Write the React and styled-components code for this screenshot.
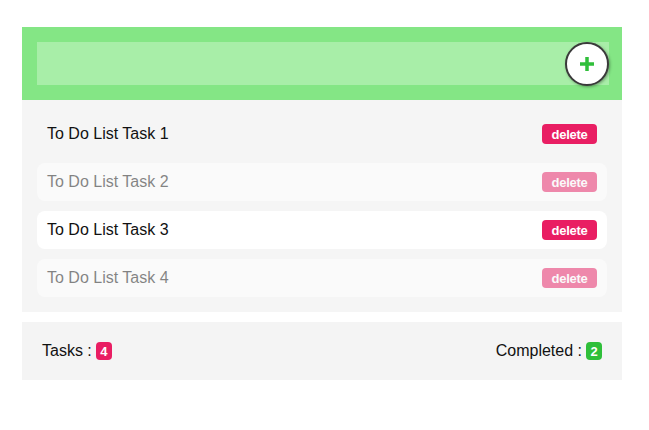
import React from "react";
import styled, { createGlobalStyle } from "styled-components";

const Global = createGlobalStyle`
  body { margin: 0; background: #fff; font-family: "Liberation Sans", Arial, sans-serif; }
`;

const Wrap = styled.div`
  width: 600px;
  padding: 27px 0 0 22px;
  display: flex;
  flex-direction: column;
`;

const Header = styled.div`
  background: #84e685;
  padding: 15px 13px 15px 15px;
  display: flex;
  align-items: center;
  position: relative;
`;

const Input = styled.input`
  flex: 1;
  height: 43px;
  border: none;
  outline: none;
  background: #a8eea8;
  box-sizing: border-box;
  padding: 0 50px 0 10px;
  font-size: 16px;
  font-family: inherit;
`;

const AddButton = styled.button`
  position: absolute;
  right: 13px;
  top: 50%;
  transform: translateY(-50%);
  width: 44px;
  height: 44px;
  border-radius: 50%;
  background: #fff;
  border: 2px solid #3a3a3a;
  box-shadow: 1px 1px 3px rgba(0, 0, 0, 0.35);
  display: flex;
  align-items: center;
  justify-content: center;
  padding: 0;
`;

const List = styled.div`
  background: #f5f5f5;
  padding: 15px;
  display: flex;
  flex-direction: column;
  gap: 10px;
`;

const Row = styled.div`
  height: 38px;
  border-radius: 8px;
  background: ${(p) => (p.$white || p.$done ? "#fff" : "transparent")};
  opacity: ${(p) => (p.$done ? 0.5 : 1)};
  display: flex;
  align-items: center;
  justify-content: space-between;
  padding: 0 10px;
`;

const Label = styled.span`
  font-size: 16px;
  color: #111;
`;

const Delete = styled.button`
  background: #e91e63;
  color: #fff;
  border: none;
  border-radius: 4px;
  width: 55px;
  height: 20px;
  font-family: "Liberation Sans", Arial, sans-serif;
  font-weight: bold;
  font-size: 13px;
  padding: 0;
  letter-spacing: -0.3px;
`;

const Footer = styled.div`
  margin-top: 10px;
  background: #f4f4f4;
  height: 58px;
  padding: 0 20px;
  display: flex;
  align-items: center;
  justify-content: space-between;
  font-size: 16px;
  color: #111;
`;

const Stat = styled.div`
  display: flex;
  align-items: center;
  gap: 4px;
`;

const Badge = styled.span`
  display: inline-flex;
  align-items: center;
  justify-content: center;
  width: 16px;
  height: 18px;
  border-radius: 4px;
  background: ${(p) => p.$color};
  color: #fff;
  font-weight: bold;
  font-size: 13px;
`;

const tasks = [
  { text: "To Do List Task 1", done: false, white: false },
  { text: "To Do List Task 2", done: true, white: false },
  { text: "To Do List Task 3", done: false, white: true },
  { text: "To Do List Task 4", done: true, white: false },
];

export default function App() {
  return (
    <>
      <Global />
      <Wrap>
        <Header>
          <Input />
          <AddButton>
            <svg width="18" height="18" viewBox="0 0 18 18">
              <path d="M9 2v14M2 9h14" stroke="#2fbf3a" strokeWidth="3.5" />
            </svg>
          </AddButton>
        </Header>
        <List>
          {tasks.map((t) => (
            <Row key={t.text} $done={t.done} $white={t.white}>
              <Label>{t.text}</Label>
              <Delete>delete</Delete>
            </Row>
          ))}
        </List>
        <Footer>
          <Stat>
            Tasks : <Badge $color="#e91e63">4</Badge>
          </Stat>
          <Stat>
            Completed : <Badge $color="#2fbf3a">2</Badge>
          </Stat>
        </Footer>
      </Wrap>
    </>
  );
}
